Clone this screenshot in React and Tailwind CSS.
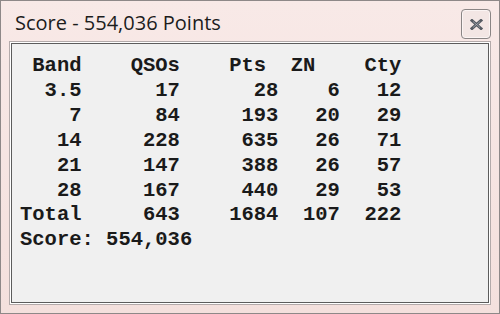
import React from "react";

const rows = [
  ["3.5", 17, 28, 6, 12],
  ["7", 84, 193, 20, 29],
  ["14", 228, 635, 26, 71],
  ["21", 147, 388, 26, 57],
  ["28", 167, 440, 29, 53],
];

function line(b, q, p, z, c) {
  return (
    String(b).padStart(5) +
    String(q).padStart(8) +
    String(p).padStart(8) +
    String(z).padStart(5) +
    String(c).padStart(5)
  );
}

export default function App() {
  const text = [
    " Band    QSOs    Pts  ZN    Cty",
    ...rows.map((r) => line(...r)),
    "Total" + String(643).padStart(8) + String(1684).padStart(8) + String(107).padStart(5) + String(222).padStart(5),
    "Score: 554,036",
  ].join("\n");

  return (
    <div className="w-[500px] h-[314px] border border-[#8e8888] bg-[linear-gradient(#f8e9e7,#f4e0dd)] flex flex-col">
      <div className="h-[40px] flex items-start justify-between shrink-0">
        <div
          className="pl-[14px] pt-[9px] text-[20px] leading-[26px] text-[#1c1c1c]"
          style={{ fontFamily: '"Open Sans", "Noto Sans", sans-serif' }}
        >
          Score - 554,036 Points
        </div>
        <div className="mt-[8px] mr-[8px] w-[30px] h-[30px] rounded-[4px] border border-[#8a8585] bg-[#f3e6e4] flex items-center justify-center shadow-[inset_0_0_0_1px_#fbf4f3]">
          <svg width="13" height="11" viewBox="0 0 13 11">
            <path d="M2 1.5 L11 9.5 M11 1.5 L2 9.5" stroke="#555b63" strokeWidth="3" strokeLinecap="square" fill="none" />
            <path d="M3 2.5 L10 8.5 M10 2.5 L3 8.5" stroke="#b0b5bc" strokeWidth="0.7" fill="none" />
          </svg>
        </div>
      </div>
      <div className="mx-[8px] mb-[8px] flex-1 border border-[#b3aaaa] bg-white p-px flex">
        <div className="flex-1 border border-[#5c5c5c] bg-[#f0f0f0]">
          <pre
            className="pl-[8px] pt-[10px] text-[20.5px] leading-[24.9px] font-bold text-[#1a1a1a] m-0"
            style={{ fontFamily: '"Liberation Mono", "Courier New", monospace' }}
          >
            {text}
          </pre>
        </div>
      </div>
    </div>
  );
}
